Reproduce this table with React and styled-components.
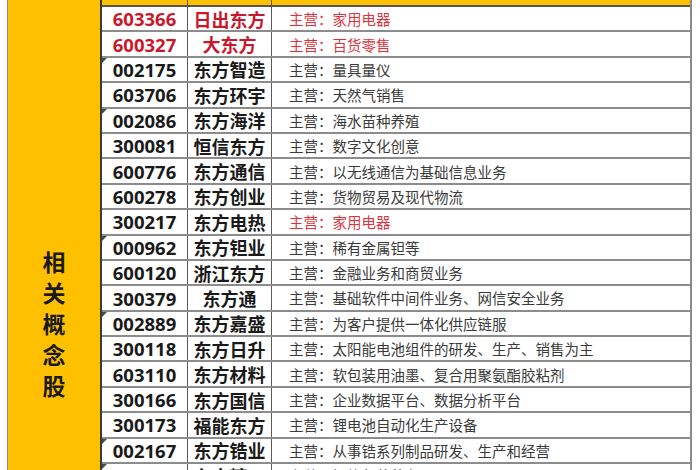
import styled, { createGlobalStyle, css } from "styled-components";

const GlobalStyle = createGlobalStyle`
  html, body {
    margin: 0;
    padding: 0;
    background: #ffffff;
    overflow: hidden;
  }
  body {
    font-family: "Noto Sans CJK SC", "Noto Sans", sans-serif;
  }
`;

const stocks = [
  { code: "603366", name: "日出东方", desc: "家用电器", red: true, redDesc: true },
  { code: "600327", name: "大东方", desc: "百货零售", red: true, redDesc: true },
  { code: "002175", name: "东方智造", desc: "量具量仪" },
  { code: "603706", name: "东方环宇", desc: "天然气销售" },
  { code: "002086", name: "东方海洋", desc: "海水苗种养殖" },
  { code: "300081", name: "恒信东方", desc: "数字文化创意" },
  { code: "600776", name: "东方通信", desc: "以无线通信为基础信息业务" },
  { code: "600278", name: "东方创业", desc: "货物贸易及现代物流" },
  { code: "300217", name: "东方电热", desc: "家用电器", redDesc: true },
  { code: "000962", name: "东方钽业", desc: "稀有金属钽等" },
  { code: "600120", name: "浙江东方", desc: "金融业务和商贸业务" },
  { code: "300379", name: "东方通", desc: "基础软件中间件业务、网信安全业务" },
  { code: "002889", name: "东方嘉盛", desc: "为客户提供一体化供应链服" },
  { code: "300118", name: "东方日升", desc: "太阳能电池组件的研发、生产、销售为主" },
  { code: "603110", name: "东方材料", desc: "软包装用油墨、复合用聚氨酯胶粘剂" },
  { code: "300166", name: "东方国信", desc: "企业数据平台、数据分析平台" },
  { code: "300173", name: "福能东方", desc: "锂电池自动化生产设备" },
  { code: "002167", name: "东方锆业", desc: "从事锆系列制品研发、生产和经营" },
  { code: "002611", name: "东方精工", desc: "智能包装装备" },
];

const Sheet = styled.div`
  display: flex;
  margin-top: -35px;
  padding-left: 7px;
  width: 685px;
`;

const Side = styled.div`
  width: 92px;
  flex: none;
  background: #ffc000;
  border-left: 1px solid #8a8a8a;
  border-right: 2px solid #3a3a3a;
  display: flex;
  flex-direction: column;
  align-items: center;
  padding-top: 281px;
  min-height: 520px;
`;

const SideChar = styled.span`
  font-size: 23px;
  font-weight: 700;
  line-height: 31px;
  color: #1a1a1a;
`;

const Table = styled.div`
  flex: 1;
  display: flex;
  flex-direction: column;
  border-right: 2px solid #8a8a8a;
`;

const Row = styled.div`
  display: grid;
  grid-template-columns: 86px 84px 1fr;
  height: 25.4px;
  box-sizing: border-box;
  border-bottom: 2px solid #8c8c8c;
  ${(p) =>
    p.$header &&
    css`
      height: 42px;
      background: #ffc000;
      border-bottom: 2px solid #555;
    `}
`;

const Cell = styled.div`
  display: flex;
  align-items: center;
  overflow: hidden;
  white-space: nowrap;
  border-right: 1px solid #5a5a5a;
  position: relative;
`;

const CodeCell = styled(Cell)`
  justify-content: center;
  font-family: "Open Sans", "Noto Sans", sans-serif;
  font-size: 18.5px;
  font-weight: 700;
  color: ${(p) => (p.$red ? "#c9182b" : "#1a1a1a")};
  ${(p) =>
    p.$flag &&
    css`
      &::before {
        content: "";
        position: absolute;
        left: 0;
        top: 0;
        border-top: 5px solid #4a4a4a;
        border-right: 5px solid transparent;
      }
    `}
`;

const NameCell = styled(Cell)`
  justify-content: center;
  font-size: 18px;
  font-weight: 700;
  color: ${(p) => (p.$red ? "#c9182b" : "#1a1a1a")};
`;

const DescCell = styled(Cell)`
  border-right: none;
  padding-left: 17px;
  font-size: 14.5px;
  color: ${(p) => (p.$red ? "#e0323c" : "#3a3a3a")};
`;

const HeaderCell = styled(Cell)`
  justify-content: center;
  align-items: flex-start;
  padding-top: 8px;
  font-size: 16px;
  font-weight: 700;
  color: #1a1a1a;
  ${(p) => p.$last && css`border-right: none;`}
`;

export default function App() {
  return (
    <>
      <GlobalStyle />
      <Sheet>
        <Side>
          {"相关概念股".split("").map((ch) => (
            <SideChar key={ch}>{ch}</SideChar>
          ))}
        </Side>
        <Table>
          <Row $header>
            <HeaderCell>代码</HeaderCell>
            <HeaderCell>名称</HeaderCell>
            <HeaderCell $last>主营业务</HeaderCell>
          </Row>
          {stocks.map((s) => (
            <Row key={s.code}>
              <CodeCell $red={s.red} $flag={s.code.startsWith("00")}>
                {s.code}
              </CodeCell>
              <NameCell $red={s.red}>{s.name}</NameCell>
              <DescCell $red={s.redDesc}>主营：{s.desc}</DescCell>
            </Row>
          ))}
        </Table>
      </Sheet>
    </>
  );
}
